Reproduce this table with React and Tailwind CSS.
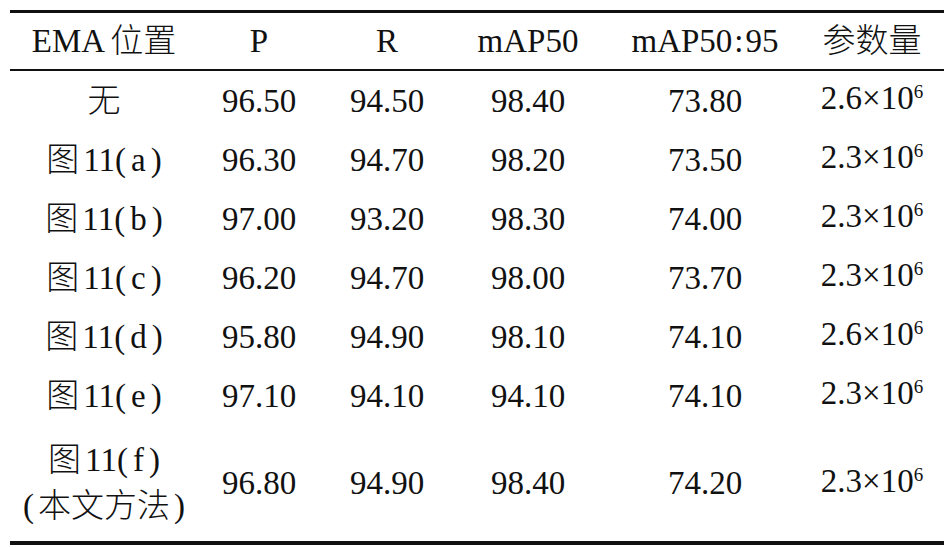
import React from "react";

const GRID = "grid grid-cols-[188px_122px_134px_148px_206px_136px]";
const SERIF = "font-['Liberation_Serif','Noto_Sans_CJK_SC',serif]";

function Cn({ children }) {
  return <span className="font-light">{children}</span>;
}

function Sci({ a }) {
  return (
    <span className="whitespace-nowrap">
      {a}×10<span className="relative -top-[11px] text-[19px]">6</span>
    </span>
  );
}

function Fig({ l }) {
  return (
    <span className="whitespace-nowrap">
      <Cn>图</Cn>
      <span className="ml-[4px]">11</span>(<span className="mx-[5px]">{l}</span>)
    </span>
  );
}

const rows = [
  [<Cn>无</Cn>, "96.50", "94.50", "98.40", "73.80", <Sci a="2.6" />],
  [<Fig l="a" />, "96.30", "94.70", "98.20", "73.50", <Sci a="2.3" />],
  [<Fig l="b" />, "97.00", "93.20", "98.30", "74.00", <Sci a="2.3" />],
  [<Fig l="c" />, "96.20", "94.70", "98.00", "73.70", <Sci a="2.3" />],
  [<Fig l="d" />, "95.80", "94.90", "98.10", "74.10", <Sci a="2.6" />],
  [<Fig l="e" />, "97.10", "94.10", "94.10", "74.10", <Sci a="2.3" />],
];

function Row({ cells, h }) {
  return (
    <div className={`${GRID} ${h}`}>
      {cells.map((c, i) => (
        <div
          key={i}
          className={`${SERIF} flex items-center justify-center leading-[40px] ${i === 5 ? "pr-[8px]" : ""}`}
        >
          {c}
        </div>
      ))}
    </div>
  );
}

export default function App() {
  return (
    <div className={`${SERIF} w-[950px] h-[547px] bg-white text-[#111] overflow-hidden`}>
      <div className={`${SERIF} ml-[10px] mt-[10px] w-[934px] text-[33px]`}>
        <div className="h-[3px] bg-[#111]" />
        <Row
          h="h-[56px]"
          cells={[
            <span className="whitespace-nowrap">
              EMA<span className="ml-[5px] font-light">位置</span>
            </span>,
            "P",
            "R",
            "mAP50",
            <span className="whitespace-nowrap">
              mAP50<span className="mx-[2px]">:</span>95
            </span>,
            <Cn>参数量</Cn>,
          ]}
        />
        <div className="h-[2px] bg-[#111]" />
        {rows.map((r, i) => (
          <Row key={i} h="h-[59px]" cells={r} />
        ))}
        <Row
          h="h-[116px]"
          cells={[
            <div className="flex flex-col items-center leading-[46px]">
              <Fig l="f" />
              <span className="whitespace-nowrap">
                (<span className="mx-[4px] font-light">本文方法</span>)
              </span>
            </div>,
            "96.80",
            "94.90",
            "98.40",
            "74.20",
            <Sci a="2.3" />,
          ]}
        />
        <div className="h-[4px] bg-[#111]" />
      </div>
    </div>
  );
}
